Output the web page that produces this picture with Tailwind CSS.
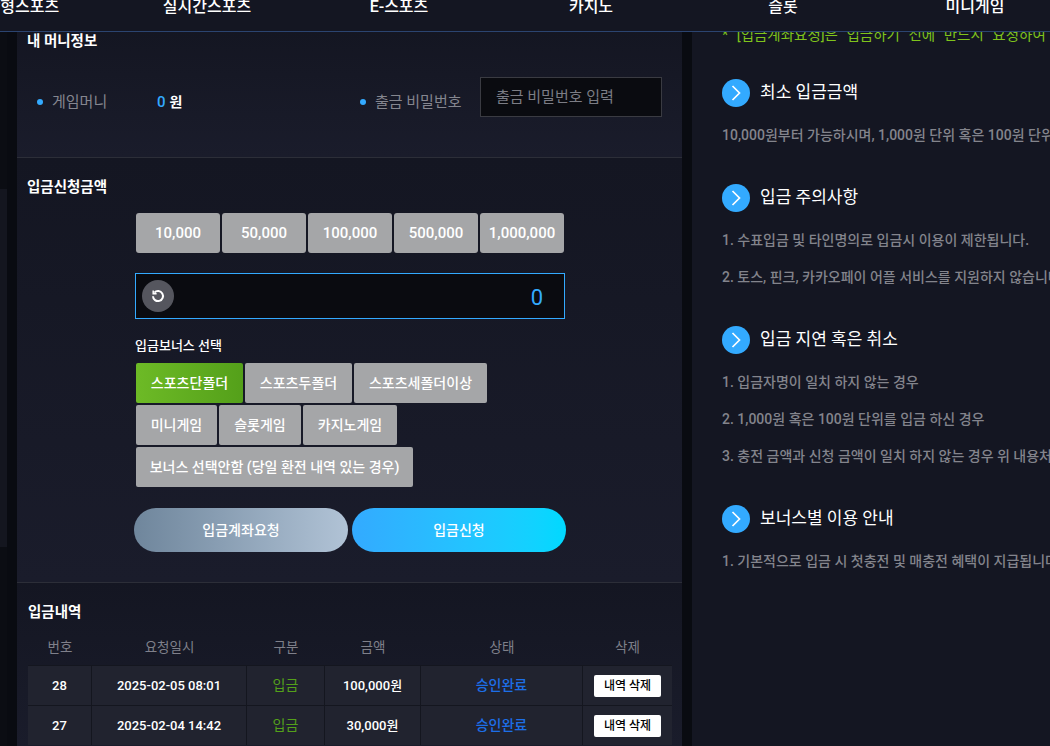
<!DOCTYPE html>
<html lang="ko">
<head>
    <meta charset="UTF-8">
    <meta name="viewport" content="width=device-width, initial-scale=1.0">
    <script src="https://cdn.jsdelivr.net/npm/@tailwindcss/browser@4"></script>
    <title>입금신청</title>
</head>
<body class="w-[1050px] h-[746px] overflow-hidden bg-[#0b0d13] font-['Roboto','Noto_Sans_CJK_KR',sans-serif] text-white">
    <!-- top nav -->
    <div class="h-[32px] bg-[#141622] border-b border-[#2b4470] overflow-hidden">
        <div class="flex ml-[-81px] w-[1344px] text-[16px] font-medium leading-[14px]">
            <div class="w-[192px] text-center">조합형스포츠</div>
            <div class="w-[192px] text-center">실시간스포츠</div>
            <div class="w-[192px] text-center">E-스포츠</div>
            <div class="w-[192px] text-center">카지노</div>
            <div class="w-[192px] text-center">슬롯</div>
            <div class="w-[192px] text-center">미니게임</div>
        </div>
    </div>

    <div class="flex h-[714px]">
        <!-- left edge -->
        <div class="w-[17px] flex">
            <div class="w-[7px] h-[515px] pt-[157px]">
                <div class="h-[358px] bg-[#14161f]"></div>
            </div>
            <div class="w-[10px] bg-[#090b11]"></div>
        </div>

        <!-- main panel -->
        <div class="w-[665px]">
            <div class="h-[126px] border-b border-[#2c2e38] px-[10px] bg-gradient-to-b from-[#141622] to-[#1a1c2b]">
                <h2 class="text-[14.5px] font-bold leading-[16px] pt-[2px] box-content">내 머니정보</h2>
                <div class="flex items-start mt-[27px] h-[40px]">
                    <div class="w-[333px] flex items-center pt-[15px]">
                        <span class="w-[6px] h-[6px] rounded-full bg-[#33aaff] ml-[10px] mr-[9px]"></span>
                        <span class="w-[105px] text-[15px] leading-[20px] text-[#85868f]">게임머니</span>
                        <span class="text-[15px] leading-[20px] font-medium text-[#33aaff] mr-[4px]">0</span>
                        <span class="text-[14px] leading-[20px] font-bold">원</span>
                    </div>
                    <div class="flex items-center pt-[15px]">
                        <span class="w-[6px] h-[6px] rounded-full bg-[#33aaff] mr-[9px]"></span>
                        <span class="w-[105px] text-[15px] leading-[20px] text-[#85868f]">출금 비밀번호</span>
                    </div>
                    <div class="w-[182px] h-[40px] bg-[#0a0b10] border border-[#3a3b42] px-[15px] flex items-center text-[15px] text-[#7c7d85]">출금 비밀번호 입력</div>
                </div>
            </div>

            <div class="h-[425px] border-b border-[#2c2e38] pl-[10px] bg-gradient-to-b from-[#141622] to-[#1a1c2b]">
                <h2 class="text-[14.5px] font-bold leading-[16px] pt-[22px] box-content">입금신청금액</h2>
                <div class="ml-[109px] mt-[17px] flex gap-[2px]">
                    <div class="w-[84px] h-[40px] rounded-[3px] bg-[#a5a6a8] flex items-center justify-center text-[15px] font-medium">10,000</div>
                    <div class="w-[84px] h-[40px] rounded-[3px] bg-[#a5a6a8] flex items-center justify-center text-[15px] font-medium">50,000</div>
                    <div class="w-[84px] h-[40px] rounded-[3px] bg-[#a5a6a8] flex items-center justify-center text-[15px] font-medium">100,000</div>
                    <div class="w-[84px] h-[40px] rounded-[3px] bg-[#a5a6a8] flex items-center justify-center text-[15px] font-medium">500,000</div>
                    <div class="w-[84px] h-[40px] rounded-[3px] bg-[#a5a6a8] flex items-center justify-center text-[15px] font-medium">1,000,000</div>
                </div>
                <div class="ml-[108px] mt-[20px] w-[430px] h-[46px] bg-[#0a0b10] border border-[#33aaff] flex items-center justify-between pl-[6px] pr-[21px]">
                    <div class="w-[32px] h-[32px] rounded-full bg-[#55565e] flex items-center justify-center">
                        <svg width="14" height="14" viewBox="0 0 14 14" fill="none" stroke="white" stroke-width="2">
                            <path d="M3.4 3.6A5 5 0 1 1 2 7.2"/>
                            <path d="M2.200 1.400V4.800H5.600" stroke-width="1.500"/>
                        </svg>
                    </div>
                    <span class="text-[22px] font-normal text-[#33aaff] pt-[3px]">0</span>
                </div>
                <div class="ml-[108px] mt-[19px] text-[13px] font-medium leading-[16px]">입금보너스 선택</div>
                <div class="ml-[109px] mt-[9px] flex flex-col gap-[2px]">
                    <div class="flex gap-[2px]">
                        <div class="h-[40px] w-[107px] rounded-[2px] bg-gradient-to-r from-[#6dba26] to-[#54a01a] flex items-center justify-center text-[14px] font-medium">스포츠단폴더</div>
                        <div class="h-[40px] w-[107px] rounded-[2px] bg-[#a5a6a8] flex items-center justify-center text-[14px] font-medium">스포츠두폴더</div>
                        <div class="h-[40px] w-[133px] rounded-[2px] bg-[#a5a6a8] flex items-center justify-center text-[14px] font-medium">스포츠세폴더이상</div>
                    </div>
                    <div class="flex gap-[2px]">
                        <div class="h-[40px] w-[81px] rounded-[2px] bg-[#a5a6a8] flex items-center justify-center text-[14px] font-medium">미니게임</div>
                        <div class="h-[40px] w-[82px] rounded-[2px] bg-[#a5a6a8] flex items-center justify-center text-[14px] font-medium">슬롯게임</div>
                        <div class="h-[40px] w-[94px] rounded-[2px] bg-[#a5a6a8] flex items-center justify-center text-[14px] font-medium">카지노게임</div>
                    </div>
                    <div class="flex">
                        <div class="h-[40px] w-[277px] rounded-[2px] bg-[#a5a6a8] flex items-center justify-center text-[14px] font-medium">보너스 선택안함 (당일 환전 내역 있는 경우)</div>
                    </div>
                </div>
                <div class="ml-[107px] mt-[21px] flex gap-[4px]">
                    <div class="w-[214px] h-[44px] rounded-full bg-gradient-to-r from-[#6f869c] to-[#b1c3d6] flex items-center justify-center text-[14px] font-medium">입금계좌요청</div>
                    <div class="w-[214px] h-[44px] rounded-full bg-gradient-to-r from-[#33aaff] to-[#00d9ff] flex items-center justify-center text-[14px] font-medium">입금신청</div>
                </div>
            </div>

            <div class="pl-[11px] h-[163px] bg-gradient-to-b from-[#141622] to-[#1a1c2b]">
                <h2 class="text-[14.5px] font-bold leading-[16px] pt-[22px] h-[24px] box-content">입금내역</h2>
                <div class="w-[644px] text-[13px]">
                    <div class="flex h-[36px] items-center text-[#7f808a] text-center text-[13.5px]">
                        <div class="w-[64px]">번호</div>
                        <div class="w-[155px]">요청일시</div>
                        <div class="w-[78px]">구분</div>
                        <div class="w-[96px]">금액</div>
                        <div class="w-[162px]">상태</div>
                        <div class="w-[89px]">삭제</div>
                    </div>
                    <div class="flex h-[40px] items-center text-center bg-[#21232f] border-t border-[#14161f] font-medium">
                        <div class="w-[64px] h-full flex items-center justify-center border-r border-[#14161f]">28</div>
                        <div class="w-[155px] h-full flex items-center justify-center border-r border-[#14161f]">2025-02-05 08:01</div>
                        <div class="w-[78px] h-full flex items-center justify-center border-r border-[#14161f] text-[#54a01a] text-[14px] font-normal">입금</div>
                        <div class="w-[96px] h-full flex items-center justify-center border-r border-[#14161f]">100,000원</div>
                        <div class="w-[162px] h-full flex items-center justify-center border-r border-[#14161f] text-[#1d6fe8] text-[14px]">승인완료</div>
                        <div class="w-[89px] h-full flex items-center justify-center">
                            <div class="w-[67px] h-[22px] rounded-[2px] bg-white text-black text-[12px] flex items-center justify-center">내역 삭제</div>
                        </div>
                    </div>
                    <div class="flex h-[40px] items-center text-center bg-[#21232f] border-t border-[#14161f] font-medium">
                        <div class="w-[64px] h-full flex items-center justify-center border-r border-[#14161f]">27</div>
                        <div class="w-[155px] h-full flex items-center justify-center border-r border-[#14161f]">2025-02-04 14:42</div>
                        <div class="w-[78px] h-full flex items-center justify-center border-r border-[#14161f] text-[#54a01a] text-[14px] font-normal">입금</div>
                        <div class="w-[96px] h-full flex items-center justify-center border-r border-[#14161f]">30,000원</div>
                        <div class="w-[162px] h-full flex items-center justify-center border-r border-[#14161f] text-[#1d6fe8] text-[14px]">승인완료</div>
                        <div class="w-[89px] h-full flex items-center justify-center">
                            <div class="w-[67px] h-[22px] rounded-[2px] bg-white text-black text-[12px] flex items-center justify-center">내역 삭제</div>
                        </div>
                    </div>
                </div>
            </div>
        </div>

        <div class="w-[10px] bg-[#090b11]"></div>

        <!-- right panel -->
        <div class="flex-1 bg-[#141622] pl-[30px] overflow-hidden whitespace-nowrap">
            <p class="text-[14.5px] leading-[16px] text-[#7fc31c] [word-spacing:5px] mt-[-4px]">* [입금계좌요청]은 입금하기 전에 반드시 요청하여 주시기 바랍니다.</p>

            <div class="flex items-center gap-[10px] mt-[35px] h-[28px]">
                <div class="w-[28px] h-[28px] rounded-full bg-[#33aaff] flex items-center justify-center">
                    <svg width="12" height="16" viewBox="0 0 12 16" fill="none" stroke="white" stroke-width="1.7"><path d="M2.500 1 9.500 8 2.500 15"/></svg>
                </div>
                <h3 class="text-[17px]">최소 입금금액</h3>
            </div>
            <p class="text-[14px] leading-[20px] font-medium text-[#83848c] mt-[18px]">10,000원부터 가능하시며, 1,000원 단위 혹은 100원 단위 입금은 불가합니다.</p>

            <div class="flex items-center gap-[10px] mt-[39px] h-[28px]">
                <div class="w-[28px] h-[28px] rounded-full bg-[#33aaff] flex items-center justify-center">
                    <svg width="12" height="16" viewBox="0 0 12 16" fill="none" stroke="white" stroke-width="1.7"><path d="M2.500 1 9.500 8 2.500 15"/></svg>
                </div>
                <h3 class="text-[17px]">입금 주의사항</h3>
            </div>
            <p class="text-[14px] leading-[20px] font-medium text-[#83848c] mt-[18px]">1. 수표입금 및 타인명의로 입금시 이용이 제한됩니다.</p>
            <p class="text-[14px] leading-[20px] font-medium text-[#83848c] mt-[17px]">2. 토스, 핀크, 카카오페이 어플 서비스를 지원하지 않습니다.</p>

            <div class="flex items-center gap-[10px] mt-[39px] h-[28px]">
                <div class="w-[28px] h-[28px] rounded-full bg-[#33aaff] flex items-center justify-center">
                    <svg width="12" height="16" viewBox="0 0 12 16" fill="none" stroke="white" stroke-width="1.7"><path d="M2.500 1 9.500 8 2.500 15"/></svg>
                </div>
                <h3 class="text-[17px]">입금 지연 혹은 취소</h3>
            </div>
            <p class="text-[14px] leading-[20px] font-medium text-[#83848c] mt-[18px]">1. 입금자명이 일치 하지 않는 경우</p>
            <p class="text-[14px] leading-[20px] font-medium text-[#83848c] mt-[17px]">2. 1,000원 혹은 100원 단위를 입금 하신 경우</p>
            <p class="text-[14px] leading-[20px] font-medium text-[#83848c] mt-[17px]">3. 충전 금액과 신청 금액이 일치 하지 않는 경우 위 내용처리 됩니다.</p>

            <div class="flex items-center gap-[10px] mt-[39px] h-[28px]">
                <div class="w-[28px] h-[28px] rounded-full bg-[#33aaff] flex items-center justify-center">
                    <svg width="12" height="16" viewBox="0 0 12 16" fill="none" stroke="white" stroke-width="1.7"><path d="M2.500 1 9.500 8 2.500 15"/></svg>
                </div>
                <h3 class="text-[17px]">보너스별 이용 안내</h3>
            </div>
            <p class="text-[14px] leading-[20px] font-medium text-[#83848c] mt-[18px]">1. 기본적으로 입금 시 첫충전 및 매충전 혜택이 지급됩니다.</p>
        </div>
    </div>
</body>
</html>
